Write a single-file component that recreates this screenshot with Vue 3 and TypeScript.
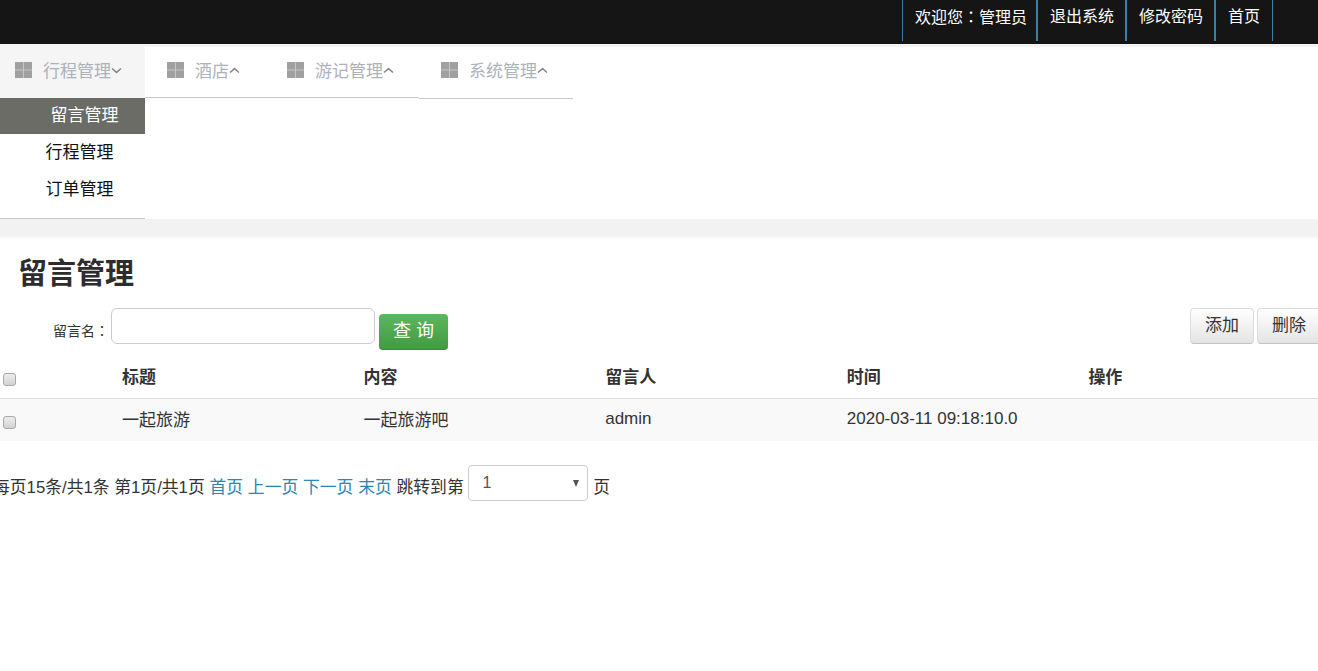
<template>
  <div class="page">
    <header class="topbar">
      <ul class="top-links">
        <li>欢迎您<span class="colon">：</span>管理员</li>
        <li><a>退出系统</a></li>
        <li><a>修改密码</a></li>
        <li><a>首页</a></li>
      </ul>
    </header>

    <section class="nav-area">
      <nav class="menus">
        <div v-for="menu in menus" :key="menu.name" class="menu" :class="{ open: menu.open }" :style="{ width: menu.width + 'px' }">
          <div class="menu-title" :style="{ paddingLeft: menu.pad + 'px' }">
            <svg class="grid-icon" width="17" height="16" viewBox="0 0 17 16">
              <rect class="grid-bg" x="0" y="0" width="17" height="16" />
              <rect x="0" y="0" width="8" height="7.5" />
              <rect x="9" y="0" width="8" height="7.5" />
              <rect x="0" y="8.5" width="8" height="7.5" />
              <rect x="9" y="8.5" width="8" height="7.5" />
            </svg>
            <span class="menu-name">{{ menu.name }}</span>
            <svg class="chevron" width="11" height="7" viewBox="0 0 11 7">
              <path :d="menu.open ? 'M1 1.5 L5.5 5.4 L10 1.5' : 'M1 5.5 L5.5 1.6 L10 5.5'" />
            </svg>
          </div>
          <ul v-if="menu.open" class="submenu">
            <li v-for="(item, i) in menu.items" :key="item" :class="{ active: i === 0 }">{{ item }}</li>
          </ul>
        </div>
      </nav>
    </section>

    <div class="band"></div>

    <main class="content">
      <h1>留言管理</h1>

      <div class="toolbar">
        <form class="search" @submit.prevent>
          <label>留言名<span class="colon">：</span></label>
          <input type="text" class="search-input" />
          <button class="btn-query" type="button">查 询</button>
        </form>
        <div class="actions">
          <button class="btn-light" type="button">添加</button>
          <button class="btn-light" type="button">删除</button>
        </div>
      </div>

      <table class="data-table">
        <thead>
          <tr>
            <th class="check-col"><input type="checkbox" /></th>
            <th v-for="col in columns" :key="col">{{ col }}</th>
          </tr>
        </thead>
        <tbody>
          <tr v-for="row in rows" :key="row.time">
            <td class="check-col"><input type="checkbox" /></td>
            <td>{{ row.title }}</td>
            <td>{{ row.body }}</td>
            <td>{{ row.user }}</td>
            <td>{{ row.time }}</td>
            <td></td>
          </tr>
        </tbody>
      </table>

      <div class="pager">
        <span>每页15条/共1条 第1页/共1页</span>
        <a>首页</a>
        <a>上一页</a>
        <a>下一页</a>
        <a>末页</a>
        <span>跳转到第</span>
        <div class="page-select">
          <span>1</span>
          <i class="caret"></i>
        </div>
        <span>页</span>
      </div>
    </main>
  </div>
</template>

<script setup lang="ts">
interface Menu {
  name: string
  width: number
  pad: number
  open: boolean
  items: string[]
}

const menus: Menu[] = [
  { name: '行程管理', width: 145, pad: 15, open: true, items: ['留言管理', '行程管理', '订单管理'] },
  { name: '酒店', width: 120, pad: 22, open: false, items: [] },
  { name: '游记管理', width: 154, pad: 22, open: false, items: [] },
  { name: '系统管理', width: 154, pad: 22, open: false, items: [] }
]

const columns = ['标题', '内容', '留言人', '时间', '操作']

const rows = [
  { title: '一起旅游', body: '一起旅游吧', user: 'admin', time: '2020-03-11 09:18:10.0' }
]
</script>

<style>
html,
body {
  margin: 0;
  background: #fff;
  overflow: hidden;
}
</style>

<style scoped>
.page {
  font-family: "Liberation Sans", "Noto Sans CJK SC", sans-serif;
  font-size: 16px;
  color: #333;
  overflow: hidden;
  height: 671px;
}

ul {
  list-style: none;
  margin: 0;
  padding: 0;
}

/* 全角冒号居中 */
.colon {
  font-family: "Noto Sans CJK TC", sans-serif;
}

/* 顶部栏 */
.topbar {
  height: 41px;
  padding-bottom: 3px;
  background: #151515;
  display: flex;
  justify-content: flex-end;
  padding-right: 45px;
}

.top-links {
  display: flex;
  height: 41px;
  border-right: 1px solid #3f7fa6;
}

.top-links li {
  border-left: 2px solid #3f7fa6;
  padding: 0 11px 0 12px;
  color: #fff;
  font-size: 16px;
  line-height: 33px;
}

.top-links li:first-child {
  border-left-width: 1px;
  padding-right: 9px;
}

.top-links li:last-child {
  padding-right: 12px;
}

/* 菜单 */
.nav-area {
  height: 172px;
  border-top: 3px solid #f4f4f4;
  background: #fff;
}

.menus {
  display: flex;
  align-items: flex-start;
}

.menu {
  box-sizing: border-box;
  border-bottom: 1px solid #c8c8c8;
  height: 51px;
}

.menu:last-child {
  height: 52px;
}

.menu.open {
  height: 172px;
}

.menu-title {
  box-sizing: border-box;
  height: 51px;
  padding-bottom: 6px;
  display: flex;
  align-items: center;
  color: #adb1b9;
  font-size: 17px;
}

.menu.open .menu-title {
  background: #f5f5f5;
}

.grid-icon {
  fill: #a0a0a0;
  margin-right: 11px;
  flex: none;
}

.grid-bg {
  fill: #c6c6c6;
}

.menu-name {
  white-space: nowrap;
}

.chevron {
  fill: none;
  stroke: #85878b;
  stroke-width: 1.5;
  margin-top: 2px;
  flex: none;
}

.submenu li {
  height: 37px;
  line-height: 37px;
  padding-left: 45.5px;
  color: #111;
  font-size: 17px;
}

.submenu li.active {
  height: 36px;
  line-height: 35px;
  padding-left: 50.5px;
  background: #6b6c65;
  color: #fff;
}

.band {
  height: 17px;
  background: #f2f2f2;
  border-bottom: 2px solid #f7f7f7;
}

/* 内容区 */
h1 {
  margin: 0;
  padding: 18px 0 0 18px;
  font-size: 29px;
  line-height: 37px;
  font-weight: 700;
  color: #2d2d2d;
}

.toolbar {
  display: flex;
  justify-content: space-between;
  align-items: flex-start;
  margin-top: 15px;
}

.search {
  display: flex;
  align-items: flex-start;
  padding-left: 53px;
}

.search label {
  font-size: 14px;
  line-height: 20px;
  margin-top: 12px;
  width: 58px;
  white-space: nowrap;
}

.search-input {
  box-sizing: border-box;
  width: 264px;
  height: 36px;
  border: 1px solid #cfcace;
  border-radius: 6px;
  outline: none;
  padding: 0 8px;
  background: #fff;
}

.btn-query {
  width: 69px;
  height: 36px;
  margin: 6px 0 0 4px;
  border: none;
  border-bottom: 1px solid #3c8c3c;
  border-radius: 4px;
  background: linear-gradient(to bottom, #5cb85c, #439a43);
  color: #fff;
  font-family: inherit;
  font-size: 18px;
  padding: 0 0 5px;
}

.actions {
  display: flex;
  gap: 3px;
  flex: none;
  margin-right: -3px;
}

.btn-light {
  box-sizing: border-box;
  width: 64px;
  height: 36px;
  border: 1px solid #dcdcdc;
  border-bottom-color: #c4c4c4;
  border-radius: 4px;
  background: linear-gradient(to bottom, #fff, #e4e4e4);
  color: #333;
  font-family: inherit;
  font-size: 17px;
  padding: 0 0 5px;
}

/* 表格 */
.data-table {
  width: 1318px;
  table-layout: fixed;
  border-collapse: collapse;
  margin-top: 1px;
}

.data-table th {
  height: 47px;
  padding: 2px 12px 0;
  box-sizing: border-box;
  text-align: left;
  font-size: 17px;
  font-weight: 700;
  color: #333;
  border-bottom: 1px solid #ddd;
}

.data-table td {
  height: 43px;
  padding: 0 12px 2px;
  box-sizing: border-box;
  font-size: 17px;
  color: #333;
  background: #f9f9f9;
}

.data-table .check-col {
  width: 110px;
  padding: 0 0 0 3px;
}

.check-col input {
  appearance: none;
  display: block;
  box-sizing: border-box;
  width: 13px;
  height: 13px;
  margin: 6px 0 0;
  border: 1px solid #a9a9a9;
  border-radius: 3px;
  background: linear-gradient(to bottom, #ededed, #d2d2d2);
}

th.check-col input {
  margin-top: 10px;
}

/* 分页 */
.pager {
  display: flex;
  align-items: flex-start;
  gap: 4.8px;
  margin: 24px 0 0 -7px;
  font-size: 16.8px;
  white-space: nowrap;
}

.pager > span,
.pager > a {
  line-height: 24px;
  margin-top: 11px;
}

.pager a {
  color: #2a86b5;
}

.page-select {
  box-sizing: border-box;
  width: 120px;
  height: 36px;
  padding: 0 8px 0 13px;
  border: 1px solid #ccc;
  border-radius: 4px;
  display: flex;
  justify-content: space-between;
  align-items: center;
  font-size: 16px;
  color: #555;
}

.caret {
  width: 0;
  height: 0;
  border-left: 3.5px solid transparent;
  border-right: 3.5px solid transparent;
  border-top: 7px solid #555;
}
</style>
